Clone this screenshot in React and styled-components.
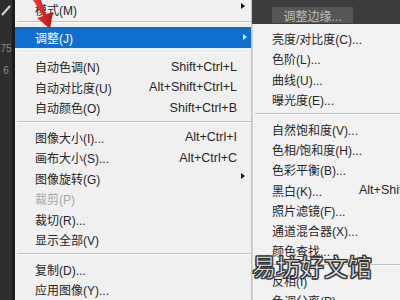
import React from 'react';
import styled, { createGlobalStyle } from 'styled-components';

const Global = createGlobalStyle`
  html, body { margin: 0; padding: 0; background: #2b2b2b; }
  body { font-family: "Liberation Sans", "Noto Sans CJK SC", sans-serif; }
`;

const Screen = styled.div`
  position: relative;
  width: 400px;
  height: 300px;
  overflow: hidden;
  display: flex;
  background: #2b2b2b;
`;

const ToolStrip = styled.div`
  width: 12px;
  flex: none;
  background: #2e2e2e;
  border-right: 3px solid #1c1c1c;
  display: flex;
  flex-direction: column;
  align-items: center;
  color: #8a8a8a;
  font-size: 10px;
  line-height: 1;
  padding-top: 4px;
  box-sizing: content-box;
  gap: 8px;
`;

const StripNum = styled.div`
  margin-top: ${p => p.top || 0}px;
`;

const Menu = styled.div`
  width: 237px;
  flex: none;
  background: #f0f0f0;
  display: flex;
  flex-direction: column;
  border-right: 1px solid #c4c4c4;
  box-sizing: border-box;
`;

const Row = styled.div`
  height: ${p => p.h || 20.5}px;
  flex: none;
  display: flex;
  align-items: center;
  padding: 0 14px 0 ${p => p.pl || 20}px;
  font-size: 12px;
  color: ${p => (p.active ? '#ffffff' : p.disabled ? '#a8a8a8' : '#262626')};
  background: ${p => (p.active ? '#0e6fcf' : 'transparent')};
  white-space: nowrap;
  position: relative;
`;

const Label = styled.span`
  flex: 1;
`;

const Shortcut = styled.span`
  color: #262626;
  font-size: 12.5px;
  margin-left: ${p => p.ml || 0}px;
`;

const Arrow = styled.span`
  position: absolute;
  right: ${p => p.r || 7}px;
  top: ${p => p.t || 50}%;
  transform: translateY(-50%);
  width: 0;
  height: 0;
  border-top: 3.5px solid transparent;
  border-bottom: 3.5px solid transparent;
  border-left: 4px solid ${p => (p.light ? '#dfe9ff' : '#111')};
`;

const Sep = styled.div`
  height: 9px;
  flex: none;
  position: relative;
  &::after {
    content: '';
    position: absolute;
    left: 2px;
    right: 0;
    top: 3px;
    height: 1px;
    background: ${p => (p.faint ? '#e2e2e2' : '#c4c4c4')};
    box-shadow: 0 1px 0 #fbfbfb;
  }
`;

const RightCol = styled.div`
  flex: 1;
  display: flex;
  flex-direction: column;
`;

const TopBar = styled.div`
  height: 24px;
  flex: none;
  background: #3c3c3c;
  display: flex;
  align-items: flex-end;
  padding-left: 20px;
`;

const EdgeButton = styled.div`
  width: 81px;
  height: 16px;
  margin-bottom: 1px;
  background: #565656;
  color: #bdbdbd;
  font-size: 12px;
  display: flex;
  align-items: center;
  justify-content: center;
`;

const SubMenu = styled.div`
  flex: 1;
  background: #f2f2f2;
  border-left: 1px solid #d4d4d4;
  padding-top: 4px;
  display: flex;
  flex-direction: column;
`;

const Watermark = styled.div`
  position: absolute;
  left: 252px;
  top: 254px;
  font-family: "Noto Sans CJK SC", sans-serif;
  font-size: 24px;
  line-height: 1;
  color: #ffffff;
  -webkit-text-stroke: 0.6px #2a2a2a;
  text-shadow: -1px -1px 0 #333, 1px -1px 0 #333, -1px 1px 0 #333, 1px 1px 0 #333, 0 0 2px #000;
`;

const Pointer = styled.svg`
  position: absolute;
  left: 0;
  top: 0;
`;

const main = [
  { t: 'row', label: '模式(M)', h: 18, arrow: true, at: 34 },
  { t: 'sep' },
  { t: 'row', label: '调整(J)', active: true, arrow: true },
  { t: 'sep', faint: true },
  { t: 'row', label: '自动色调(N)', sc: 'Shift+Ctrl+L' },
  { t: 'row', label: '自动对比度(U)', sc: 'Alt+Shift+Ctrl+L' },
  { t: 'row', label: '自动颜色(O)', sc: 'Shift+Ctrl+B' },
  { t: 'sep' },
  { t: 'row', label: '图像大小(I)...', sc: 'Alt+Ctrl+I' },
  { t: 'row', label: '画布大小(S)...', sc: 'Alt+Ctrl+C' },
  { t: 'row', label: '图像旋转(G)', arrow: true, at: 40 },
  { t: 'row', label: '裁剪(P)', disabled: true },
  { t: 'row', label: '裁切(R)...' },
  { t: 'row', label: '显示全部(V)' },
  { t: 'sep' },
  { t: 'row', label: '复制(D)...' },
  { t: 'row', label: '应用图像(Y)...' },
];

const sub = [
  '亮度/对比度(C)...',
  '色阶(L)...',
  '曲线(U)...',
  '曝光度(E)...',
  '-',
  '自然饱和度(V)...',
  '色相/饱和度(H)...',
  '色彩平衡(B)...',
  ['黑白(K)...', 'Alt+Shift+Ctrl+B'],
  '照片滤镜(F)...',
  '通道混合器(X)...',
  '颜色查找...',
  '-',
  '反相(I)',
  '色调分离(P)...',
];

export default function App() {
  return (
    <>
      <Global />
      <Screen>
        <ToolStrip>
          <svg width="10" height="12" viewBox="0 0 10 12">
            <path d="M1 11 L9 2" stroke="#d8d8d8" strokeWidth="2" />
          </svg>
          <StripNum top={20}>75</StripNum>
          <StripNum top={4}>6</StripNum>
        </ToolStrip>
        <Menu>
          {main.map((m, i) =>
            m.t === 'sep' ? (
              <Sep key={i} faint={m.faint} />
            ) : (
              <Row key={i} h={m.h} active={m.active} disabled={m.disabled}>
                <Label>{m.label}</Label>
                {m.sc && <Shortcut>{m.sc}</Shortcut>}
                {m.arrow && <Arrow light={m.active} t={m.at} r={m.active ? 4 : 6} />}
              </Row>
            )
          )}
        </Menu>
        <RightCol>
          <TopBar>
            <EdgeButton>调整边缘...</EdgeButton>
          </TopBar>
          <SubMenu>
            {sub.map((s, i) =>
              s === '-' ? (
                <Sep key={i} />
              ) : Array.isArray(s) ? (
                <Row key={i} pl={19} h={20.3}>
                  <span>{s[0]}</span>
                  <Shortcut ml={37}>{s[1]}</Shortcut>
                </Row>
              ) : (
                <Row key={i} pl={19} h={i < 4 ? 20.5 : 20.3}>
                  <Label>{s}</Label>
                </Row>
              )
            )}
          </SubMenu>
        </RightCol>
        <Pointer width="60" height="32" viewBox="0 0 60 32">
          <defs>
            <linearGradient id="rg" x1="0" y1="0" x2="1" y2="0">
              <stop offset="0" stopColor="#f23a3a" />
              <stop offset="1" stopColor="#b81818" />
            </linearGradient>
          </defs>
          <polygon
            points="33,0 41,0 46,14 53,12 50,29 37,18 43,16"
            fill="url(#rg)"
          />
        </Pointer>
        <Watermark>易坊好文馆</Watermark>
      </Screen>
    </>
  );
}
